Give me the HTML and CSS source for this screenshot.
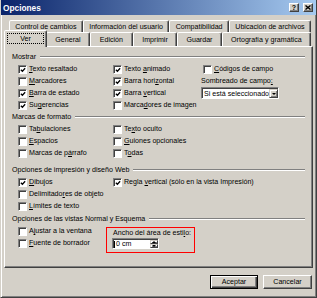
FILE: index.html
```html
<!DOCTYPE html>
<html lang="es">
<head>
  <meta charset="UTF-8" />
  <title>Opciones</title>
  <link rel="stylesheet" href="styles.css">
</head>
<body>
  <div class="window">
    <div class="titlebar">
      <span class="title">Opciones</span>
      <span class="caption-btn">?</span>
      <span class="caption-btn close">
        <svg width="6" height="5" viewBox="0 0 6 5"><path d="M0.5 0.5 L5.5 4.5 M5.5 0.5 L0.5 4.5" stroke="#000" stroke-width="1.4"/></svg>
      </span>
    </div>

    <div class="tab-row back">
      <span class="tab">Control de cambios</span>
      <span class="tab">Información del usuario</span>
      <span class="tab">Compatibilidad</span>
      <span class="tab">Ubicación de archivos</span>
    </div>
    <div class="tab-row front">
      <span class="tab active"><span class="focus">Ver</span></span>
      <span class="tab">General</span>
      <span class="tab">Edición</span>
      <span class="tab">Imprimir</span>
      <span class="tab">Guardar</span>
      <span class="tab">Ortografía y gramática</span>
    </div>

    <div class="panel">
      <div class="group">
        <div class="group-label">Mostrar</div>
        <div class="grid">
          <div class="check"><span class="box"><svg viewBox="0 0 7 7"><path d="M1 3.2 L2.8 5 L6 1.5" /></svg></span><span><u>T</u>exto resaltado</span></div>
          <div class="check"><span class="box"><svg viewBox="0 0 7 7"><path d="M1 3.2 L2.8 5 L6 1.5" /></svg></span><span>Texto <u>a</u>nimado</span></div>
          <div class="check shift"><span class="box"></span><span><u>C</u>ódigos de campo</span></div>

          <div class="check"><span class="box"></span><span><u>M</u>arcadores</span></div>
          <div class="check"><span class="box"><svg viewBox="0 0 7 7"><path d="M1 3.2 L2.8 5 L6 1.5" /></svg></span><span>Barra hori<u>z</u>ontal</span></div>
          <div class="field-label"><span>Sombreado de campo<u>:</u></span></div>

          <div class="check"><span class="box"><svg viewBox="0 0 7 7"><path d="M1 3.2 L2.8 5 L6 1.5" /></svg></span><span><u>B</u>arra de estado</span></div>
          <div class="check"><span class="box"><svg viewBox="0 0 7 7"><path d="M1 3.2 L2.8 5 L6 1.5" /></svg></span><span>Barra <u>v</u>ertical</span></div>
          <div class="select">
            <span class="select-text">Si está seleccionado</span>
            <span class="drop-btn"><span class="arrow-down"></span></span>
          </div>

          <div class="check"><span class="box"><svg viewBox="0 0 7 7"><path d="M1 3.2 L2.8 5 L6 1.5" /></svg></span><span>Su<u>g</u>erencias</span></div>
          <div class="check"><span class="box"></span><span>Marca<u>d</u>ores de imagen</span></div>
        </div>
      </div>

      <div class="group">
        <div class="group-label">Marcas de formato</div>
        <div class="grid">
          <div class="check"><span class="box"></span><span>Ta<u>b</u>ulaciones</span></div>
          <div class="check wide"><span class="box"></span><span>Te<u>x</u>to oculto</span></div>
          <div class="check"><span class="box"></span><span><u>E</u>spacios</span></div>
          <div class="check wide"><span class="box"></span><span><u>G</u>uiones opcionales</span></div>
          <div class="check"><span class="box"></span><span>Marcas de p<u>á</u>rrafo</span></div>
          <div class="check wide"><span class="box"></span><span>T<u>o</u>das</span></div>
        </div>
      </div>

      <div class="group print">
        <div class="group-label">Opciones de impresión y diseño Web</div>
        <div class="grid">
          <div class="check"><span class="box"><svg viewBox="0 0 7 7"><path d="M1 3.2 L2.8 5 L6 1.5" /></svg></span><span><u>D</u>ibujos</span></div>
          <div class="check wide"><span class="box"><svg viewBox="0 0 7 7"><path d="M1 3.2 L2.8 5 L6 1.5" /></svg></span><span>Regla <u>v</u>ertical (sólo en la vista Impresión)</span></div>
          <div class="check"><span class="box"></span><span>Delimitado<u>r</u>es de objeto</span></div>
          <div class="check wide"></div>
          <div class="check"><span class="box"></span><span><u>L</u>ímites de texto</span></div>
        </div>
      </div>

      <div class="group views">
        <div class="group-label">Opciones de las vistas Normal y Esquema</div>
        <div class="grid views-grid">
          <div class="check"><span class="box"></span><span>A<u>j</u>ustar a la ventana</span></div>
          <div class="style-area">
            <div class="style-label"><span>Ancho del área de esti<u>l</u>o:</span></div>
            <div class="spin">
              <span class="spin-text"><span class="caret"></span><span>0 cm</span></span>
              <span class="spin-btns">
                <span class="spin-btn"><span class="arrow-up"></span></span>
                <span class="spin-btn"><span class="arrow-down"></span></span>
              </span>
            </div>
          </div>
          <div class="check"><span class="box"></span><span><u>F</u>uente de borrador</span></div>
        </div>
      </div>
    </div>

    <div class="buttons">
      <span class="btn default">Aceptar</span>
      <span class="btn">Cancelar</span>
    </div>
  </div>
</body>
</html>
```

FILE: styles.css
```css
* {
  box-sizing: border-box;
}

body {
  margin: 0;
  background: #d4d0c8;
  font-family: "Liberation Sans", Arial, sans-serif;
  font-size: 7.1px;
  color: #000;
}

u {
  text-underline-offset: 1px;
}

/* Window frame */
.window {
  width: 317px;
  height: 298px;
  border-left: 1px solid #d4d0c8;
  border-right: 1px solid #404040;
  border-bottom: 1px solid #404040;
  box-shadow: inset 1px 0 0 #fff, inset -1px -1px 0 #808080;
}

.titlebar {
  display: flex;
  align-items: center;
  height: 15px;
  padding: 0 3px 0 2px;
  background: linear-gradient(to right, #0a246a, #a6caf0);
}

.title {
  flex: 1;
  color: #fff;
  font-weight: bold;
  font-size: 8.3px;
}

.caption-btn {
  width: 10px;
  height: 9px;
  margin-left: 4px;
  display: flex;
  align-items: center;
  justify-content: center;
  background: #d4d0c8;
  border: 1px solid;
  border-color: #fff #404040 #404040 #fff;
  box-shadow: inset -1px -1px 0 #808080;
  font-size: 7px;
  font-weight: bold;
  line-height: 1;
}

.caption-btn svg {
  display: block;
}

/* Tabs */
.tab-row {
  display: flex;
}

.tab-row.back {
  height: 12px;
  margin: 5px 5px 0 8px;
}

.tab-row.front {
  height: 14px;
  margin: 0 5px 0 4px;
}

.tab {
  flex: 1 1 auto;
  min-width: 43px;
  display: flex;
  align-items: center;
  justify-content: center;
  white-space: nowrap;
  border: 1px solid;
  border-bottom: 0;
  border-color: #fff #404040 transparent #fff;
  border-radius: 2px 2px 0 0;
  box-shadow: inset -1px 0 0 #808080;
  background: #d4d0c8;
}

.tab.active {
  margin: -2px -1px -1px -1px;
  z-index: 1;
  align-items: stretch;
}

.focus {
  flex: 1;
  display: flex;
  align-items: center;
  justify-content: center;
  margin: 2px 2px 3px;
  border: 1px dotted #000;
}

/* Page */
.panel {
  height: 222px;
  margin: 0 3px;
  padding: 4px 7px 0;
  border: 1px solid;
  border-color: #fff #404040 #404040 #fff;
  box-shadow: inset -1px -1px 0 #808080;
}

.group-label {
  display: flex;
  align-items: center;
  height: 12px;
  white-space: nowrap;
}

.group-label::after {
  content: "";
  flex: 1;
  margin-left: 4px;
  border-top: 1px solid #808080;
  border-bottom: 1px solid #fff;
}

.group.print {
  margin-top: 5px;
}

.group.views {
  margin-top: 1px;
}

.grid {
  display: grid;
  grid-template-columns: 95px 88px 1fr;
  grid-auto-rows: 12px;
  padding-left: 6px;
}

.views-grid {
  grid-template-columns: 88px 1fr;
}

.check {
  display: flex;
  align-items: center;
  white-space: nowrap;
}

.check.shift {
  padding-left: 2px;
}

.wide {
  grid-column: 2 / 4;
}

.box {
  width: 9px;
  height: 9px;
  margin-right: 2px;
  flex-shrink: 0;
  background: #fff;
  border: 1px solid;
  border-color: #808080 #fff #fff #808080;
  box-shadow: inset 1px 1px 0 #404040;
  padding: 1px 0 0 1px;
}

.box svg {
  display: block;
  width: 6px;
  height: 6px;
  fill: none;
  stroke: #000;
  stroke-width: 1.5;
}

.field-label {
  display: flex;
  align-items: center;
}

/* Dropdown */
.select {
  width: 78px;
  height: 12px;
  display: flex;
  align-items: center;
  background: #fff;
  border: 1px solid;
  border-color: #808080 #fff #fff #808080;
  box-shadow: inset 1px 1px 0 #404040;
  padding: 1px 0 0 2px;
}

.select-text {
  flex: 1;
  white-space: nowrap;
}

.drop-btn,
.spin-btn {
  display: flex;
  align-items: center;
  justify-content: center;
  background: #d4d0c8;
  border: 1px solid;
  border-color: #d4d0c8 #404040 #404040 #d4d0c8;
  box-shadow: inset 1px 1px 0 #fff, inset -1px -1px 0 #808080;
}

.drop-btn {
  width: 9px;
  height: 9px;
}

.arrow-down {
  width: 0;
  height: 0;
  border-left: 2px solid transparent;
  border-right: 2px solid transparent;
  border-top: 2px solid #000;
}

.arrow-up {
  width: 0;
  height: 0;
  border-left: 2px solid transparent;
  border-right: 2px solid transparent;
  border-bottom: 2px solid #000;
}

/* Style area width (highlighted) */
.style-area {
  grid-column: 2;
  grid-row: 1 / 3;
  width: 89px;
  height: 26px;
  margin-top: 2px;
  border: 1px solid #ff0000;
}

.style-label {
  height: 9px;
  padding-left: 6px;
  display: flex;
  align-items: center;
  white-space: nowrap;
}

.spin {
  width: 47px;
  height: 11px;
  margin: 1px 0 0 5px;
  display: flex;
  background: #fff;
  border: 1px solid;
  border-color: #808080 #fff #fff #808080;
  box-shadow: inset 1px 1px 0 #404040;
  padding: 1px 0 0 1px;
}

.spin-text {
  flex: 1;
  display: flex;
  align-items: center;
  white-space: nowrap;
}

.caret {
  width: 1px;
  height: 7px;
  background: #000;
  margin-right: 1px;
}

.spin-btns {
  width: 8px;
  display: flex;
  flex-direction: column;
}

.spin-btn {
  flex: 1;
}

/* Dialog buttons */
.buttons {
  display: flex;
  justify-content: flex-end;
  gap: 5px;
  margin-top: 7px;
  padding-right: 4px;
}

.btn {
  width: 49px;
  height: 14px;
  display: flex;
  align-items: center;
  justify-content: center;
  background: #d4d0c8;
  border: 1px solid;
  border-color: #fff #404040 #404040 #fff;
  box-shadow: inset -1px -1px 0 #808080;
}

.btn.default {
  width: 48px;
  border-color: #000;
  box-shadow: inset 1px 1px 0 #fff, inset -1px -1px 0 #404040, inset -2px -2px 0 #808080;
}
```
